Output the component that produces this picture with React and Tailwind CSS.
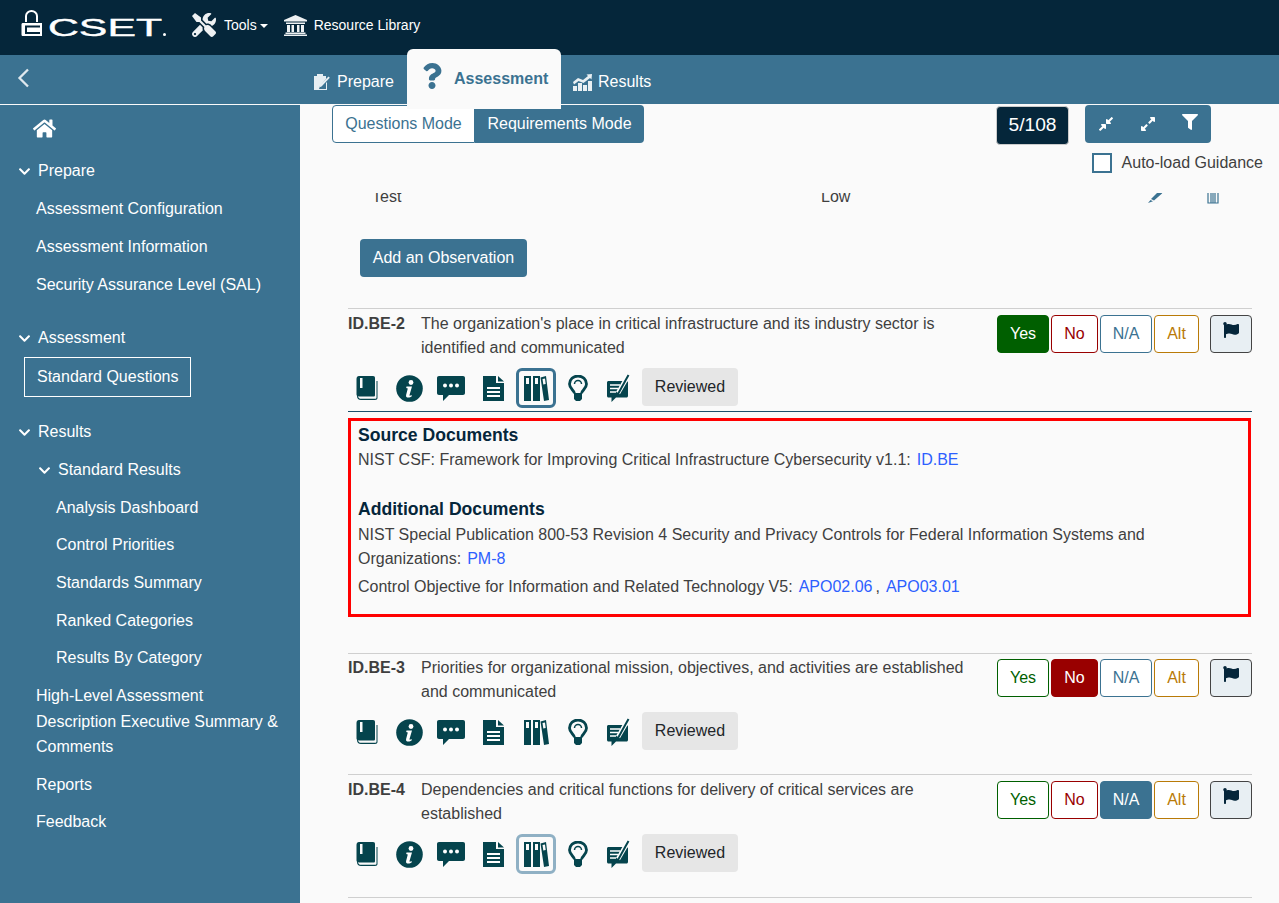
import React from 'react';
import { FaHome, FaTools, FaChevronDown, FaFlag, FaFilter, FaQuestion, FaCompressAlt, FaExpandAlt } from 'react-icons/fa';

const teal = '#05444d';

function BookIcon() {
  return (
    <svg width="22" height="25" viewBox="0 0 22 25">
      <path d="M1 3v17c0 2.500 1.500 4 4 4h14c1.500 0 2.500-1 2.500-2V5h-1v16.500c0 .8-.5 1.300-1.500 1.300H5c-1.500 0-2.500-.8-3-2.300z" fill={teal} />
      <path fillRule="evenodd" d="M3 0h14c1.500 0 2 .8 2 2v17c0 1-.5 1.500-1.500 1.500H4c-2 0-3.500-.5-3.500-2V3C.5 1 1.500 0 3 0zM4 2v10h2.500V2z" fill={teal} />
    </svg>
  );
}

function InfoIcon() {
  return (
    <svg width="27" height="27" viewBox="0 0 27 27">
      <circle cx="13.500" cy="13.500" r="13.300" fill={teal} />
      <circle cx="15" cy="7.500" r="2.400" fill="#fff" />
      <path d="M10.500 11.500h5.500l-2.500 8.500c-.2.800.5.900 2 .1l.3 1.200c-2 1.700-6.500 2.200-5.700-1.300l1.700-6.500-1.600-.5z" fill="#fff" />
    </svg>
  );
}

function CommentIcon() {
  return (
    <svg width="28" height="25" viewBox="0 0 28 25">
      <path d="M2 0h24c1.200 0 2 .8 2 2v15c0 1.200-.8 2-2 2H12l-6 6v-6H2c-1.200 0-2-.8-2-2V2C0 .8.800 0 2 0z" fill={teal} />
      <circle cx="8" cy="9.500" r="2" fill="#fff" />
      <circle cx="14" cy="9.500" r="2" fill="#fff" />
      <circle cx="20" cy="9.500" r="2" fill="#fff" />
    </svg>
  );
}

function DocIcon() {
  return (
    <svg width="21" height="25" viewBox="0 0 21 25">
      <path d="M0 0h13v7h8v18H0z" fill={teal} />
      <path d="M15 0l6 5.500h-6z" fill={teal} />
      <path d="M4 11h13v2H4zM4 15h13v2H4zM4 19h13v2H4z" fill="#fff" />
    </svg>
  );
}

function BooksIcon() {
  return (
    <svg width="25" height="25" viewBox="0 0 25 25">
      <path fillRule="evenodd" d="M0 0h7v25H0zM2 2v6h3V2zM9 0h7v25H9zM11 2v6h3V2z" fill={teal} />
      <path fillRule="evenodd" d="M16.500 1.500L22 0l3 24-5 1zM18.500 3l.8 5.500 2.400-.5L21 2.500z" fill={teal} />
    </svg>
  );
}

function BulbIcon() {
  return (
    <svg width="20" height="26" viewBox="0 0 20 26" fill="none">
      <path d="M6.500 18.500c0-3-5-4.500-5-9.500a8.500 8 0 0 1 17 0c0 5-5 6.500-5 9.500" stroke={teal} strokeWidth="2.800" />
      <path d="M6.500 9a3.500 3.500 0 0 1 7 0" stroke={teal} strokeWidth="1.500" />
      <path d="M6 18h8v6l-2 2H8l-2-2z" fill={teal} />
    </svg>
  );
}

function NoteIcon() {
  return (
    <svg width="23" height="28" viewBox="0 0 23 28">
      <path d="M1.500 7h18c.8 0 1.500.7 1.500 1.500V22c0 .8-.7 1.500-1.500 1.500H9L4.500 28v-4.500h-3C.7 23.500 0 22.800 0 22V8.500C0 7.700.7 7 1.500 7z" fill={teal} />
      <path d="M3 11h10M3 14.500h8M3 18h6" stroke="#fff" strokeWidth="1.300" />
      <path d="M21.500 1L11 19" stroke="#fff" strokeWidth="4.500" />
      <path d="M21.500 1L11 20" stroke={teal} strokeWidth="2" />
    </svg>
  );
}

function ClipboardIcon() {
  return (
    <svg width="17" height="16" viewBox="0 0 17 16">
      <path d="M1 2h3V0h6v2h3v3L7 12l-1 3h7V9l1-1v8H1z" fill="#e6eef2" />
      <path d="M15.500 2.500l1.300 1.300L8.500 12.500l-2 .7.600-2.200z" fill="#e6eef2" />
    </svg>
  );
}

function ChartIcon() {
  return (
    <svg width="19" height="17" viewBox="0 0 19 17" fill="#e9f0f3">
      <path d="M0 12h4v5H0zM5 9h4v8H5zM10 11h4v6h-4zM15 7h4v10h-4z" />
      <path d="M0 8l5-4 5 2 5-4-1.500-1.500L19 0l-.5 5.500L17 4l-6.500 5-5-2L1 10.500z" />
    </svg>
  );
}

function BankIcon() {
  return (
    <svg width="23" height="21" viewBox="0 0 23 21" fill="#eef1f3">
      <path d="M11.500 0L23 5v1.500H0V5z" />
      <path d="M2 7.500h19V9H2zM3 10h3v7H3zM7.500 10h2.500v7H7.500zM13 10h2.500v7H13zM17 10h3v7h-3zM1.500 17.500h20V19h-20zM0 19.500h23V21H0z" />
    </svg>
  );
}

function PencilIcon() {
  return (
    <svg width="15" height="12" viewBox="0 0 15 12" fill="#3b7291">
      <path d="M11 0h4l-1 2.500-8 7-3-1.500zM2.500 9l2.500 1.200L0 12z" />
    </svg>
  );
}

function TrashLines() {
  return (
    <svg width="12" height="16" viewBox="0 0 12 16" fill="none" stroke="#3b7291" strokeWidth="1.200">
      <path d="M1 0v14h10V0M4 0v14M6 0v14M8 0v14" />
    </svg>
  );
}

function Logo() {
  return (
    <svg width="148" height="31" viewBox="0 0 148 31" fill="none">
      <path d="M5 12V6a5.500 5 0 0 1 11 0v6" stroke="#fff" strokeWidth="2" />
      <path d="M2 13h19v13H2c-1 0-1.500-.5-1.500-1.500v-10C.5 13.500 1 13 2 13z" fill="#fff" />
      <path d="M19 16.500H5v6.500h14" stroke="#05263a" strokeWidth="2" />
      <text x="27" y="26" fontFamily="Liberation Sans" fontSize="23" stroke="#fff" strokeWidth="0.4" fill="#fff" textLength="114" lengthAdjust="spacingAndGlyphs">CSET</text>
      <circle cx="143.500" cy="24.500" r="1.500" fill="#fff" />
    </svg>
  );
}

function TopBar() {
  return (
    <div className="h-[55px] bg-[#05263a] flex items-center text-white text-sm pl-[21px] pb-[5px]">
      <Logo />
      <FaTools className="ml-[23px] text-[24px] text-[#eef1f3]" />
      <span className="ml-[8px]">Tools</span>
      <span className="ml-[3px] mt-[1px] border-x-[4px] border-t-[4px] border-x-transparent border-t-white" />
      <span className="ml-[16px]"><BankIcon /></span>
      <span className="ml-[7px]">Resource Library</span>
    </div>
  );
}

function TabBar() {
  return (
    <div className="h-[49px] bg-[#3b7291] flex items-start text-white">
      <div className="w-[313px] pl-[17px] pt-[13px]">
        <svg width="13" height="20" viewBox="0 0 13 20" fill="none" stroke="#dfe8ee" strokeWidth="2.300">
          <path d="M11 1.500L2.500 10l8.500 8.500" />
        </svg>
      </div>
      <div className="flex items-center h-full pt-[5px] w-[94px]">
        <ClipboardIcon />
        <span className="ml-[7px]">Prepare</span>
      </div>
      <div className="relative z-20 -mt-[6px] h-[60px] w-[154px] bg-[#fafafa] rounded-t-[6px] flex items-center text-[#3b7291] font-bold pl-[12px]">
        <FaQuestion className="text-[26px] -mt-[7px]" />
        <span className="ml-[9px] -mt-[1px]">Assessment</span>
      </div>
      <div className="flex items-center h-full pt-[5px] ml-[12px]">
        <ChartIcon />
        <span className="ml-[6px]">Results</span>
      </div>
    </div>
  );
}

function SideItem({ label, className = 'pl-[36px] h-[38px]' }) {
  return <div className={`flex items-center ${className}`}>{label}</div>;
}

function SideHead({ label, className = 'pl-[18px]' }) {
  return (
    <div className={`flex items-center h-[38px] ${className}`}>
      <FaChevronDown className="text-[13px] mr-[7px]" />
      {label}
    </div>
  );
}

function Sidebar() {
  return (
    <div className="w-[300px] shrink-0 h-[798px] mt-[1px] bg-[#3b7291] text-white">
      <div className="h-[47px] pl-[33px] pt-[12px]">
        <FaHome className="text-[23px]" />
      </div>
      <SideHead label="Prepare" />
      <SideItem label="Assessment Configuration" />
      <SideItem label="Assessment Information" />
      <SideItem label="Security Assurance Level (SAL)" />
      <div className="h-[15px]" />
      <SideHead label="Assessment" />
      <div className="pl-[24px] h-[42px] flex items-start">
        <div className="h-[40px] w-[167px] border border-white flex items-center pl-[12px]">Standard Questions</div>
      </div>
      <div className="h-[14px]" />
      <SideHead label="Results" />
      <SideHead label="Standard Results" className="pl-[38px]" />
      <SideItem label="Analysis Dashboard" className="pl-[56px] h-[37px]" />
      <SideItem label="Control Priorities" className="pl-[56px] h-[38px]" />
      <SideItem label="Standards Summary" className="pl-[56px] h-[38px]" />
      <SideItem label="Ranked Categories" className="pl-[56px] h-[37px]" />
      <SideItem label="Results By Category" className="pl-[56px] h-[38px]" />
      <div className="pl-[36px] w-[282px] h-[83px] mt-[6px] leading-[25.500px]">
        High-Level Assessment Description Executive Summary &amp; Comments
      </div>
      <SideItem label="Reports" className="pl-[36px] h-[37px]" />
      <SideItem label="Feedback" />
    </div>
  );
}

const answerStyles = {
  Yes: { on: 'bg-[#005f00] border-[#005f00] text-white', off: 'bg-white border-[#005f00] text-[#005f00]', width: 'w-[52px]' },
  No: { on: 'bg-[#990000] border-[#990000] text-white', off: 'bg-white border-[#990000] text-[#990000]', width: 'w-[47px]' },
  'N/A': { on: 'bg-[#3b7291] border-[#3b7291] text-white', off: 'bg-white border-[#3b7291] text-[#3b7291]', width: 'w-[52px]' },
  Alt: { on: 'bg-[#b97a07] border-[#b97a07] text-white', off: 'bg-white border-[#b97a07] text-[#b97a07]', width: 'w-[45px]' },
};

function AnswerButton({ label, active }) {
  const s = answerStyles[label];
  return (
    <div className={`h-[38px] rounded-[4px] border flex items-center justify-center ${s.width} ${active ? s.on : s.off}`}>
      {label}
    </div>
  );
}

function IconSlot({ children, className = 'w-[42px]' }) {
  return <div className={`h-[40px] flex items-center justify-center ${className}`}>{children}</div>;
}

function Question({ id, lines, answer, selected, top, children }) {
  const ring = selected === 'dark' ? 'border-[3px] border-[#3b7291]' : selected === 'light' ? 'border-[3px] border-[#8fb0c4]' : '';
  return (
    <div className={top}>
      <div className="flex items-start h-[43px]">
        <div className="w-[73px] font-bold text-[#3f3f3f] leading-[24px] -mt-[3px]">{id}</div>
        <div className="w-[577px] text-[#3f3f3f] leading-[24px] shrink-0 -mt-[3px]">
          {lines.map((l) => <div key={l}>{l}</div>)}
        </div>
        <div className="flex gap-[2px] -ml-[1px]">
          {['Yes', 'No', 'N/A', 'Alt'].map((a) => <AnswerButton key={a} label={a} active={answer === a} />)}
          <div className="w-[42px] h-[38px] ml-[9px] rounded-[4px] border border-[#444] bg-[#e8eff3] flex items-start justify-center pt-[6px]">
            <FaFlag className="text-[16px] text-[#05263a]" />
          </div>
        </div>
      </div>
      <div className="flex items-start mt-[10px] h-[40px] -ml-[2px]">
        <IconSlot><BookIcon /></IconSlot>
        <IconSlot><InfoIcon /></IconSlot>
        <IconSlot><CommentIcon /></IconSlot>
        <IconSlot><DocIcon /></IconSlot>
        <div className={`w-[40px] h-[40px] ml-[2px] mr-[1px] rounded-[6px] flex items-center justify-center ${ring}`}>
          <BooksIcon />
        </div>
        <IconSlot><BulbIcon /></IconSlot>
        <IconSlot className="w-[38px]"><NoteIcon /></IconSlot>
        <div className="ml-[5px] w-[96px] h-[38px] bg-[#e6e6e6] rounded-[4px] flex items-center justify-center text-[#212529]">Reviewed</div>
      </div>
      {children}
    </div>
  );
}

function DocLink({ children }) {
  return <span className="text-[#2d5fff] ml-[6px]">{children}</span>;
}

function Documents() {
  return (
    <div className="mt-[3px] border-t border-[#1c4f6b] pt-[6px]">
      <div className="h-[199px] mr-[1px] border-[3px] border-[#ff0000] pl-[7px] pt-[2px] text-[#3f3f3f]">
        <div className="font-bold text-[17.600px] text-[#05263a] leading-[24px]">Source Documents</div>
        <div className="leading-[24px] mt-[1px]">NIST CSF: Framework for Improving Critical Infrastructure Cybersecurity v1.1:<DocLink>ID.BE</DocLink></div>
        <div className="font-bold text-[17.600px] text-[#05263a] leading-[24px] mt-[25px]">Additional Documents</div>
        <div className="leading-[24px] mt-[2px] w-[860px]">NIST Special Publication 800-53 Revision 4 Security and Privacy Controls for Federal Information Systems and Organizations:<DocLink>PM-8</DocLink></div>
        <div className="leading-[24px] mt-[4px]">Control Objective for Information and Related Technology V5:<DocLink>APO02.06</DocLink><span className="ml-[3px]">,</span><DocLink>APO03.01</DocLink></div>
      </div>
    </div>
  );
}

function Toolbar() {
  return (
    <div className="flex items-start pl-[32px] pt-[1px] h-[40px]">
      <div className="flex h-[38px] w-[312px]">
        <div className="w-[143px] border border-[#3b7291] bg-white rounded-l-[4px] text-[#3b7291] flex items-center justify-center">Questions Mode</div>
        <div className="w-[169px] bg-[#3b7291] rounded-r-[4px] text-white flex items-center justify-center">Requirements Mode</div>
      </div>
      <div className="ml-[352px] mt-[1px] w-[73px] h-[39px] bg-[#05263a] rounded-[4px] border border-[#ccc] text-white text-[19.200px] flex items-center justify-center">5/108</div>
      <div className="ml-[16px] w-[126px] h-[38px] bg-[#3b7291] rounded-[4px] text-white flex items-center">
        <FaCompressAlt className="ml-[13px] text-[16px]" />
        <FaExpandAlt className="ml-[26px] text-[16px]" />
        <FaFilter className="ml-[26px] text-[16px] -mt-[4px]" />
      </div>
    </div>
  );
}

export default function App() {
  return (
    <div className="h-[903px] w-[1279px] overflow-hidden bg-[#fafafa] text-[16px] font-['Liberation_Sans',Arial,sans-serif]">
      <TopBar />
      <TabBar />
      <div className="flex">
        <Sidebar />
        <div className="flex-1 min-w-0">
          <div className="relative z-10 h-[89px] bg-[#fafafa]">
            <Toolbar />
            <div className="flex justify-end items-center h-[20px] mt-[9px] pr-[16px] text-[#3f3f3f]">
              <div className="w-[20px] h-[20px] border-2 border-[#3b7291] bg-white mr-[10px]" />
              Auto-load Guidance
            </div>
          </div>
          <div className="flex items-center h-[24px] -mt-[8px] text-[#3f3f3f]">
            <span className="ml-[72px] w-[449px]">Test</span>
            <span>Low</span>
            <span className="ml-[298px]"><PencilIcon /></span>
            <span className="ml-[44px]"><TrashLines /></span>
          </div>
          <div className="ml-[60px] mt-[30px] w-[167px] h-[38px] bg-[#3b7291] rounded-[4px] text-white flex items-center justify-center">Add an Observation</div>
          <div className="ml-[48px] mr-[27px] mt-[31px]">
            <div className="border-t border-[#cfcfcf]">
              <Question id="ID.BE-2" answer="Yes" selected="dark" top="pt-[6px]" lines={["The organization's place in critical infrastructure and its industry sector is", 'identified and communicated']}>
                <Documents />
              </Question>
            </div>
            <div className="border-t border-[#cfcfcf] mt-[36px] h-[121px]">
              <Question id="ID.BE-3" answer="No" top="pt-[5px]" lines={['Priorities for organizational mission, objectives, and activities are established', 'and communicated']} />
            </div>
            <div className="border-t border-[#cfcfcf] h-[123px]">
              <Question id="ID.BE-4" answer="N/A" selected="light" top="pt-[6px]" lines={['Dependencies and critical functions for delivery of critical services are', 'established']} />
            </div>
            <div className="border-t border-[#cfcfcf]" />
          </div>
        </div>
      </div>
    </div>
  );
}
